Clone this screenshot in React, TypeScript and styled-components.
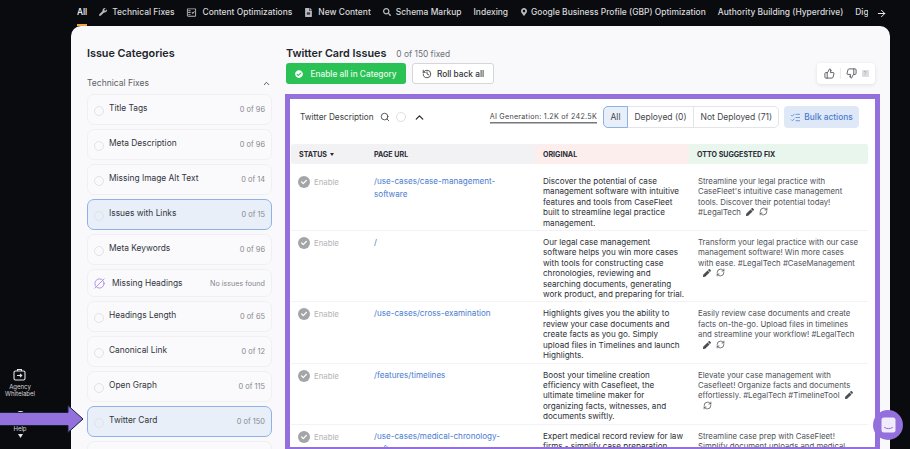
import React from 'react';
import styled, {createGlobalStyle} from 'styled-components';
import {
  ArrowRight,
  ChevronUp,
  CircleSlash2,
  History,
  ListChecks,
  RefreshCw,
  Search,
  ThumbsDown,
  ThumbsUp,
} from 'lucide-react';
import {FaCheck, FaCheckCircle, FaFileAlt, FaMapMarkerAlt, FaPen, FaSearch, FaWrench} from 'react-icons/fa';
import {MdOutlineFactCheck} from 'react-icons/md';

const GlobalStyle = createGlobalStyle`
  html, body {
    margin: 0;
    padding: 0;
    height: 449px;
    overflow: hidden;
    background: #0a0b0f;
    font-family: Inter, "Liberation Sans", sans-serif;
  }
  * { box-sizing: border-box; }
`;

const Page = styled.div`
  position: relative;
  width: 910px;
  height: 449px;
  overflow: hidden;
  display: flex;
  flex-direction: column;
`;

const TopBar = styled.nav`
  height: 26px;
  flex: none;
  display: flex;
  align-items: center;
  padding-left: 77px;
`;

const TabStrip = styled.div`
  width: 791px;
  overflow: hidden;
  display: flex;
  align-items: center;
  gap: 12px;
  height: 26px;
`;

const Tab = styled.div<{$active?: boolean; $tight?: boolean}>`
  position: relative;
  height: 26px;
  flex: none;
  display: flex;
  align-items: center;
  gap: ${p => (p.$tight ? 3 : 5)}px;
  padding-bottom: 2px;
  font-size: 8.45px;
  font-weight: 500;
  color: ${p => (p.$active ? '#fff' : '#d8d9dc')};
  svg { color: #b9bbc0; }
  ${p =>
    p.$active &&
    `&::after {
      content: '';
      position: absolute;
      left: 0;
      right: 0;
      bottom: 0;
      height: 2px;
      background: #f0a63a;
    }`}
`;

const NextArrow = styled.div`
  margin-left: 8px;
  display: flex;
  color: #fff;
`;

const Body = styled.div`
  flex: 1;
  display: flex;
  min-height: 0;
`;

const Rail = styled.aside`
  width: 71px;
  flex: none;
  display: flex;
  flex-direction: column;
  align-items: center;
  justify-content: flex-end;
  color: #d5d6da;
  font-size: 6px;
  line-height: 7px;
  text-align: center;
  padding-bottom: 11px;
  padding-right: 31px;
`;

const RailItem = styled.div`
  display: flex;
  flex-direction: column;
  align-items: center;
  gap: 2px;
  margin-bottom: 13px;
  &:last-child { margin-bottom: 0; }
`;

const Card = styled.main`
  width: 819px;
  height: 440px;
  flex: none;
  display: flex;
  background: #f9f9fb;
  border-radius: 10px 10px 0 0;
  padding: 20px 10px 0 16px;
  overflow: hidden;
`;

const Sidebar = styled.section`
  width: 185px;
  flex: none;
  margin-right: 13px;
`;

const Title = styled.h2`
  margin: 0;
  font-size: 10.8px;
  line-height: 15px;
  font-weight: 600;
  color: #22252b;
`;

const GroupHead = styled.div`
  margin: 15px 0 4px;
  height: 14px;
  display: flex;
  align-items: center;
  justify-content: space-between;
  padding-right: 1px;
  font-size: 8.5px;
  color: #5c5f66;
  svg { color: #444; }
`;

const CategoryList = styled.div`
  display: flex;
  flex-direction: column;
  gap: 4px;
`;

const Category = styled.div<{$active?: boolean; $short?: boolean}>`
  height: ${p => (p.$short ? 28 : 31)}px;
  flex: none;
  display: flex;
  align-items: center;
  padding: 0 6px;
  border-radius: 7px;
  border: 1px solid ${p => (p.$active ? '#8fb2e6' : '#f0f0f3')};
  background: ${p => (p.$active ? '#e9eff8' : '#fafafc')};
`;

const RadioDot = styled.span`
  width: 10px;
  height: 10px;
  flex: none;
  margin-right: 5px;
  margin-top: 2px;
  border-radius: 50%;
  border: 1px solid #e2e3e6;
`;

const NoIssueIcon = styled.span`
  display: flex;
  flex: none;
  margin-right: 7px;
  color: #a78be8;
`;

const CategoryName = styled.span<{$flat?: boolean}>`
  flex: 1;
  margin-bottom: ${p => (p.$flat ? 0 : 3)}px;
  font-size: 8.4px;
  color: #33363c;
`;

const CategoryCount = styled.span<{$note?: boolean}>`
  font-size: ${p => (p.$note ? 7.2 : 7.4)}px;
  color: #85888e;
`;

const Content = styled.section`
  width: 595px;
  flex: none;
`;

const TitleRow = styled.div`
  display: flex;
  align-items: baseline;
  gap: 10px;
  margin-left: 1px;
`;

const Fixed = styled.span`
  font-size: 8.4px;
  color: #6e7177;
`;

const ActionRow = styled.div`
  margin-top: 2px;
  margin-left: 1px;
  height: 21px;
  display: flex;
  gap: 6px;
  width: 589px;
`;

const EnableAll = styled.button`
  width: 120px;
  border: 0;
  border-radius: 3px;
  background: #2ac155;
  color: #e9fbef;
  font: 500 8.3px Inter, sans-serif;
  display: flex;
  align-items: center;
  justify-content: center;
  gap: 7px;
`;

const RollBack = styled.button`
  width: 82px;
  border: 1px solid #d5d6da;
  border-radius: 3px;
  background: #fff;
  color: #33363c;
  font: 500 8.3px Inter, sans-serif;
  display: flex;
  align-items: center;
  justify-content: center;
  gap: 5px;
`;

const Feedback = styled.div`
  margin-left: auto;
  width: 58px;
  border-radius: 4px;
  background: #fff;
  box-shadow: 0 1px 4px rgba(0, 0, 0, 0.1);
  display: flex;
  align-items: center;
  justify-content: center;
  gap: 5px;
  color: #55585e;
`;

const Sep = styled.span`
  width: 1px;
  height: 11px;
  background: #eceded;
`;

const HelpChip = styled.span`
  width: 7px;
  height: 7px;
  background: #dcdde0;
  border-radius: 1px;
  color: #a2a3a7;
  font-size: 5px;
  line-height: 7px;
  text-align: center;
`;

const Outlined = styled.div`
  margin-top: 10px;
  height: 358px;
  border: 5px solid #9370db;
  background: #fff;
  overflow: hidden;
`;

const Toolbar = styled.div`
  height: 34px;
  margin-top: 1px;
  display: flex;
  align-items: center;
  padding: 0 16px 0 10px;
  font-size: 8.25px;
  color: #3c3f45;
`;

const ToolbarLabel = styled.span`
  margin-right: 6px;
`;

const ToolCircle = styled.span`
  width: 10px;
  height: 10px;
  border-radius: 50%;
  border: 1px solid #dedfe2;
  margin: 0 7px 0 6px;
`;

const AiGeneration = styled.span`
  margin-left: auto;
  margin-right: 6px;
  font-size: 7.2px;
  letter-spacing: 0.25px;
  line-height: 10px;
  color: #44474d;
  border-bottom: 1px solid #77797e;
  box-shadow: 0 1px 0 #b8b9bc;
`;

const Segmented = styled.div`
  height: 22px;
  width: 176px;
  display: flex;
  background: #fff;
  border: 1px solid #e3e4e7;
  border-radius: 5px;
`;

const Segment = styled.div<{$active?: boolean}>`
  display: flex;
  align-items: center;
  justify-content: center;
  padding: 0 6.5px;
  flex: none;
  font-size: 8.5px;
  color: #44474d;
  margin: -1px 0;
  border-right: 1px solid #e3e4e7;
  &:first-child { margin-left: -1px; border-radius: 5px 0 0 5px; }
  &:last-child { border-right: 0; }
  ${p => p.$active && `background: #e9eff8; border: 1px solid #8fb2e6;`}
`;

const BulkActions = styled.button`
  margin-left: 5px;
  width: 75px;
  height: 22px;
  border: 0;
  border-radius: 4px;
  background: #dfe8f7;
  color: #4a7bd0;
  font: 500 8.3px Inter, sans-serif;
  display: flex;
  align-items: center;
  justify-content: center;
  gap: 3px;
`;

const columns = '75px 169px 154px 179px';

const TableHead = styled.div`
  margin: 10px 7px 6px 1px;
  height: 20px;
  display: grid;
  grid-template-columns: ${columns};
  border-radius: 3px;
  background: #f2f2f5;
  overflow: hidden;
`;

const HeadCell = styled.div<{$tint?: string}>`
  display: flex;
  align-items: center;
  gap: 3px;
  padding-left: 8px;
  font-size: 7.1px;
  font-weight: 700;
  color: #2a2d33;
  background: ${p => p.$tint ?? 'transparent'};
`;

const Caret = styled.span`
  width: 0;
  height: 0;
  border-left: 2.5px solid transparent;
  border-right: 2.5px solid transparent;
  border-top: 3px solid #2a2d33;
`;

const Row = styled.div`
  margin: 0 7px 0 1px;
  display: grid;
  grid-template-columns: ${columns};
  padding: 6px 0 2px;
  border-bottom: 1px solid #f3f3f5;
`;

const StatusCell = styled.div`
  display: flex;
  align-items: flex-start;
  gap: 4px;
  padding-left: 7px;
  font-size: 7.8px;
  line-height: 12px;
  color: #b3b4b8;
`;

const StatusCheck = styled.span`
  width: 12px;
  height: 12px;
  border-radius: 50%;
  background: #a4a5a8;
  color: #fff;
  display: flex;
  align-items: center;
  justify-content: center;
`;

const UrlCell = styled.a`
  margin-top: -1px;
  padding: 0 30px 0 8px;
  font-size: 8.1px;
  line-height: 13px;
  color: #4a7bd0;
  overflow-wrap: break-word;
`;

const OriginalCell = styled.div`
  padding: 0 4px 0 8px;
  font-size: 8.1px;
  line-height: 10.4px;
  color: #2c2f35;
`;

const FixCell = styled.div`
  padding: 0 8px 0 9px;
  font-size: 7.8px;
  line-height: 10.4px;
  color: #50535a;
`;

const FixTool = styled.span`
  display: inline-flex;
  align-items: center;
  vertical-align: -1px;
  margin-left: 5px;
  color: #4a4d52;
`;

const ArrowOverlay = styled.svg`
  position: absolute;
  left: 0;
  top: 404px;
`;

const ChatBubble = styled.div`
  position: absolute;
  left: 873px;
  top: 410px;
  width: 30px;
  height: 30px;
  border-radius: 50%;
  background: #9370db;
  display: flex;
  align-items: center;
  justify-content: center;
`;

const categories = [
  {name: 'Title Tags', count: '0 of 96'},
  {name: 'Meta Description', count: '0 of 96'},
  {name: 'Missing Image Alt Text', count: '0 of 14'},
  {name: 'Issues with Links', count: '0 of 15', active: true},
  {name: 'Meta Keywords', count: '0 of 96'},
  {name: 'Missing Headings', count: 'No issues found', none: true},
  {name: 'Headings Length', count: '0 of 65'},
  {name: 'Canonical Link', count: '0 of 12'},
  {name: 'Open Graph', count: '0 of 115'},
  {name: 'Twitter Card', count: '0 of 150', active: true},
  {name: 'Twitter Site', count: '0 of 96'},
];

const rows = [
  {
    url: '/use-cases/case-management-software',
    original:
      'Discover the potential of case management software with intuitive features and tools from CaseFleet built to streamline legal practice management.',
    fix: "Streamline your legal practice with CaseFleet's intuitive case management tools. Discover their potential today! #LegalTech",
  },
  {
    url: '/',
    original:
      'Our legal case management software helps you win more cases with tools for constructing case chronologies, reviewing and searching documents, generating work product, and preparing for trial.',
    fix: 'Transform your legal practice with our case management software! Win more cases with ease. #LegalTech #CaseManagement',
  },
  {
    url: '/use-cases/cross-examination',
    original:
      'Highlights gives you the ability to review your case documents and create facts as you go. Simply upload files in Timelines and launch Highlights.',
    fix: 'Easily review case documents and create facts on-the-go. Upload files in timelines and streamline your workflow! #LegalTech',
  },
  {
    url: '/features/timelines',
    original:
      'Boost your timeline creation efficiency with Casefleet, the ultimate timeline maker for organizing facts, witnesses, and documents swiftly.',
    fix: 'Elevate your case management with Casefleet! Organize facts and documents effortlessly. #LegalTech #TimelineTool',
  },
  {
    url: '/use-cases/medical-chronology-software',
    original:
      'Expert medical record review for law firms - simplify case preparation with organized chronologies.',
    fix: 'Streamline case prep with CaseFleet! Simplify document uploads and medical record review today.',
  },
];

export default function App() {
  return (
    <Page>
      <GlobalStyle />
      <TopBar>
        <TabStrip>
          <Tab $active>All</Tab>
          <Tab><FaWrench size={8} />Technical Fixes</Tab>
          <Tab><MdOutlineFactCheck size={11} />Content Optimizations</Tab>
          <Tab><FaFileAlt size={9} />New Content</Tab>
          <Tab><FaSearch size={8} />Schema Markup</Tab>
          <Tab>Indexing</Tab>
          <Tab $tight><FaMapMarkerAlt size={8} />Google Business Profile (GBP) Optimization</Tab>
          <Tab>Authority Building (Hyperdrive)</Tab>
          <Tab>Digital PR</Tab>
        </TabStrip>
        <NextArrow><ArrowRight size={11} /></NextArrow>
      </TopBar>
      <Body>
        <Rail>
          <RailItem>
            <svg width="13" height="13" viewBox="0 0 13 13" fill="none" stroke="#e3e4e7" strokeWidth="1.1">
              <rect x="1" y="3" width="11" height="9" rx="1.5" />
              <path d="M4.5 3V1.5h4V3M4 7.5h4.5M7 5.8l1.7 1.7L7 9.2" />
            </svg>
            <span>Agency<br />Whitelabel</span>
          </RailItem>
          <RailItem>
            <svg width="13" height="13" viewBox="0 0 13 13" fill="none" stroke="#e3e4e7" strokeWidth="1.2">
              <path d="M2 6a4.5 4.5 0 0 1 9 0" />
              <circle cx="6.5" cy="9" r="1.5" />
            </svg>
            <span>Help</span>
            <svg width="5" height="4" viewBox="0 0 5 4" fill="#e3e4e7"><path d="M0 0h5L2.5 4z" /></svg>
          </RailItem>
        </Rail>
        <Card>
          <Sidebar>
            <Title>Issue Categories</Title>
            <GroupHead>
              Technical Fixes
              <ChevronUp size={9} strokeWidth={2.4} />
            </GroupHead>
            <CategoryList>
              {categories.map(c => (
                <Category key={c.name} $active={c.active} $short={c.none}>
                  {c.none ? (
                    <NoIssueIcon><CircleSlash2 size={11} /></NoIssueIcon>
                  ) : (
                    <RadioDot />
                  )}
                  <CategoryName $flat={c.none}>{c.name}</CategoryName>
                  <CategoryCount $note={c.none}>{c.count}</CategoryCount>
                </Category>
              ))}
            </CategoryList>
          </Sidebar>
          <Content>
            <TitleRow>
              <Title>Twitter Card Issues</Title>
              <Fixed>0 of 150 fixed</Fixed>
            </TitleRow>
            <ActionRow>
              <EnableAll><FaCheckCircle size={8} color="#fff" />Enable all in Category</EnableAll>
              <RollBack><History size={10} strokeWidth={2} />Roll back all</RollBack>
              <Feedback>
                <ThumbsUp size={11} />
                <Sep />
                <ThumbsDown size={11} />
                <HelpChip>?</HelpChip>
              </Feedback>
            </ActionRow>
            <Outlined>
              <Toolbar>
                <ToolbarLabel>Twitter Description</ToolbarLabel>
                <Search size={10} />
                <ToolCircle />
                <ChevronUp size={13} strokeWidth={2.2} color="#222" />
                <AiGeneration>AI Generation: 1.2K of 242.5K</AiGeneration>
                <Segmented>
                  <Segment $active>All</Segment>
                  <Segment>Deployed (0)</Segment>
                  <Segment>Not Deployed (71)</Segment>
                </Segmented>
                <BulkActions><ListChecks size={11} strokeWidth={1.6} />Bulk actions</BulkActions>
              </Toolbar>
              <TableHead>
                <HeadCell>STATUS<Caret /></HeadCell>
                <HeadCell>PAGE URL</HeadCell>
                <HeadCell $tint="#fdeeee">ORIGINAL</HeadCell>
                <HeadCell $tint="#e9f6ee">OTTO SUGGESTED FIX</HeadCell>
              </TableHead>
              {rows.map(r => (
                <Row key={r.url}>
                  <StatusCell>
                    <StatusCheck><FaCheck size={6} /></StatusCheck>
                    Enable
                  </StatusCell>
                  <UrlCell>{r.url}</UrlCell>
                  <OriginalCell>{r.original}</OriginalCell>
                  <FixCell>
                    {r.fix}
                    <FixTool><FaPen size={8} /></FixTool>
                    <FixTool><RefreshCw size={9} strokeWidth={2} /></FixTool>
                  </FixCell>
                </Row>
              ))}
            </Outlined>
          </Content>
        </Card>
      </Body>
      <ArrowOverlay width="86" height="30" viewBox="0 0 86 30">
        <path d="M-2 8.5H68V1.5L83 15 68 28.5V21.5H-2z" fill="#9370db" stroke="#10263a" strokeWidth="1" />
      </ArrowOverlay>
      <ChatBubble>
        <svg width="15" height="16" viewBox="0 0 15 16">
          <rect x="0.5" y="0.5" width="14" height="15" rx="2.5" fill="#f1ecfb" />
          <path d="M3.5 10.5c2.4 1.6 5.6 1.6 8 0" fill="none" stroke="#9370db" strokeWidth="1" strokeLinecap="round" />
        </svg>
      </ChatBubble>
    </Page>
  );
}
